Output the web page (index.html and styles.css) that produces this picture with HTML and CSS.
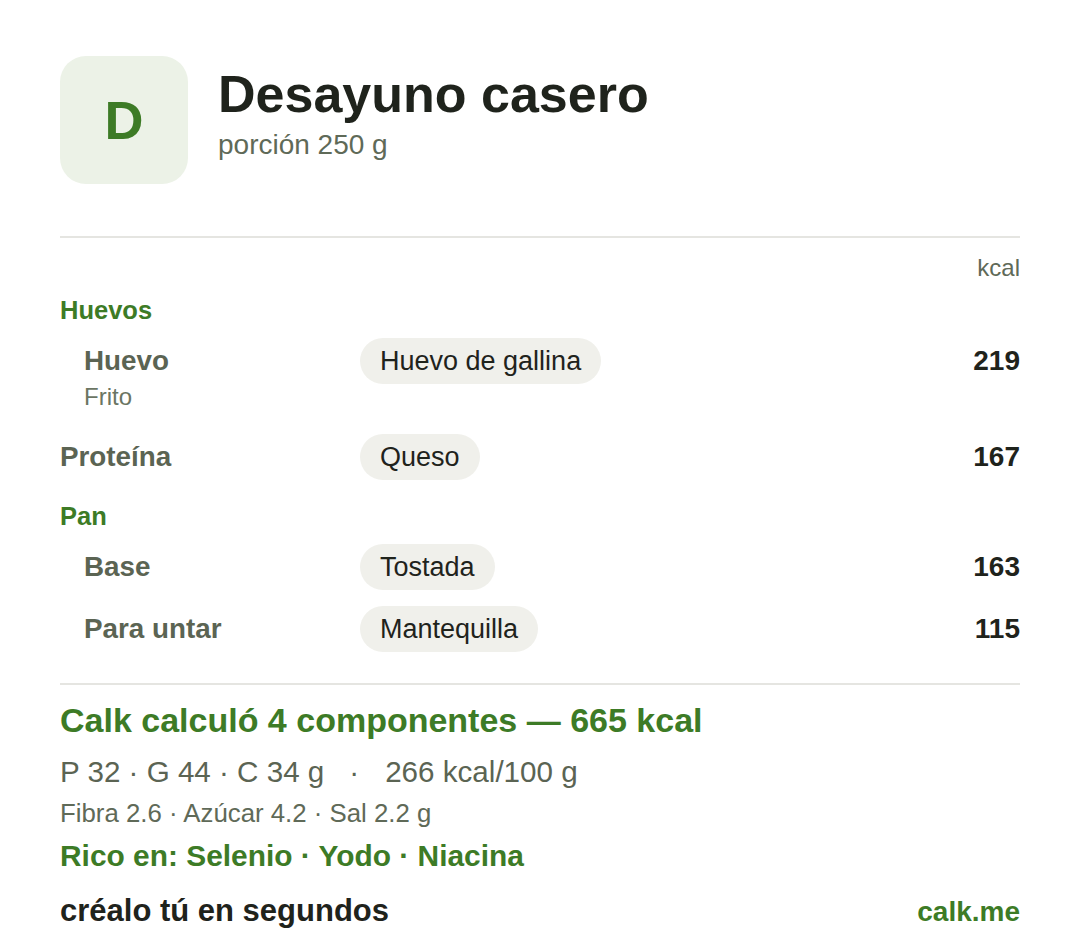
FILE: index.html
```html
<!DOCTYPE html>
<html lang="es">
<head>
<meta charset="utf-8">
<title>Desayuno casero</title>
<link rel="stylesheet" href="styles.css">
</head>
<body>
<main class="card">
  <header class="head">
    <div class="logo">D</div>
    <div class="head-text">
      <h1 class="title">Desayuno casero</h1>
      <div class="subtitle">porción 250 g</div>
    </div>
  </header>

  <hr class="divider divider-top">

  <section class="table">
    <div class="col-head">kcal</div>

    <div class="group">Huevos</div>
    <div class="row indent">
      <div class="label">
        <div class="name">Huevo</div>
        <div class="sub">Frito</div>
      </div>
      <div class="pill-cell"><span class="pill">Huevo de gallina</span></div>
      <div class="kcal">219</div>
    </div>

    <div class="row">
      <div class="label"><div class="name">Proteína</div></div>
      <div class="pill-cell"><span class="pill">Queso</span></div>
      <div class="kcal">167</div>
    </div>

    <div class="group">Pan</div>
    <div class="row indent">
      <div class="label"><div class="name">Base</div></div>
      <div class="pill-cell"><span class="pill">Tostada</span></div>
      <div class="kcal">163</div>
    </div>
    <div class="row indent">
      <div class="label"><div class="name">Para untar</div></div>
      <div class="pill-cell"><span class="pill">Mantequilla</span></div>
      <div class="kcal">115</div>
    </div>
  </section>

  <hr class="divider divider-bottom">

  <section class="summary">
    <div class="total">Calk calculó 4 componentes — 665 kcal</div>
    <div class="macros">P 32 · G 44 · C 34 g<span class="sep">·</span>266 kcal/100 g</div>
    <div class="micros">Fibra 2.6 · Azúcar 4.2 · Sal 2.2 g</div>
    <div class="rich">Rico en: Selenio · Yodo · Niacina</div>
  </section>

  <footer class="foot">
    <div class="cta">créalo tú en segundos</div>
    <div class="brand">calk.me</div>
  </footer>
</main>
</body>
</html>
```

FILE: styles.css
```css
* {
  box-sizing: border-box;
}

html, body {
  margin: 0;
  padding: 0;
  background: #ffffff;
}

body {
  font-family: "Liberation Sans", Arial, Helvetica, sans-serif;
  color: #1f231c;
}

.card {
  width: 1080px;
  padding: 56px 60px 0 60px;
}

/* Header */
.head {
  display: flex;
  align-items: flex-start;
  gap: 30px;
}

.logo {
  width: 128px;
  height: 128px;
  border-radius: 26px;
  background: #ecf2e7;
  color: #3d7b26;
  font-weight: 700;
  font-size: 54px;
  display: flex;
  align-items: center;
  justify-content: center;
  flex: none;
}

.head-text {
  padding-top: 8px;
}

.title {
  margin: 0;
  font-size: 52px;
  line-height: 60px;
  font-weight: 700;
  color: #1f231c;
}

.subtitle {
  margin-top: 4px;
  font-size: 28px;
  line-height: 34px;
  color: #5f6a58;
}

/* Dividers */
.divider {
  border: 0;
  height: 2px;
  background: #e5e5e1;
  margin: 0;
}

.divider-top {
  margin-top: 52px;
}

.divider-bottom {
  margin-top: 23px;
}

/* Table */
.col-head {
  margin-top: 16px;
  text-align: right;
  font-size: 24px;
  line-height: 28px;
  color: #5f6a58;
}

.group {
  margin-top: 13px;
  margin-bottom: 5px;
  font-size: 25.5px;
  line-height: 30px;
  font-weight: 700;
  color: #3d7b26;
}

.row {
  display: grid;
  grid-template-columns: 300px 1fr auto;
  align-items: start;
  padding: 8px 0;
}

.row.indent .label {
  padding-left: 24px;
}

.name {
  font-size: 27.8px;
  line-height: 46px;
  font-weight: 700;
  color: #5b6453;
}

.sub {
  font-size: 24px;
  line-height: 24px;
  color: #6b7563;
  margin-top: 1px;
  margin-bottom: 9px;
}

.pill {
  display: inline-block;
  height: 46px;
  line-height: 46px;
  padding: 0 20px;
  border-radius: 23px;
  background: #f0f0eb;
  font-size: 27px;
  color: #1f231c;
}

.kcal {
  font-size: 28px;
  line-height: 46px;
  font-weight: 700;
  color: #1f231c;
  text-align: right;
}

/* Summary */
.summary {
  padding-top: 15px;
}

.total {
  font-size: 34px;
  line-height: 40px;
  font-weight: 700;
  color: #3d7b26;
}

.macros {
  margin-top: 14px;
  font-size: 29.6px;
  line-height: 36px;
  color: #5b6453;
}

.sep {
  margin: 0 26px 0 25px;
}

.micros {
  margin-top: 8px;
  font-size: 25.8px;
  line-height: 30px;
  color: #5f6a58;
}

.rich {
  margin-top: 11px;
  font-size: 29.9px;
  line-height: 34px;
  font-weight: 700;
  color: #3d7b26;
}

/* Footer */
.foot {
  margin-top: 20px;
  display: flex;
  justify-content: space-between;
  align-items: baseline;
}

.cta {
  font-size: 31px;
  line-height: 36px;
  font-weight: 700;
  color: #1f231c;
}

.brand {
  font-size: 28px;
  line-height: 36px;
  font-weight: 700;
  color: #3d7b26;
}
```
